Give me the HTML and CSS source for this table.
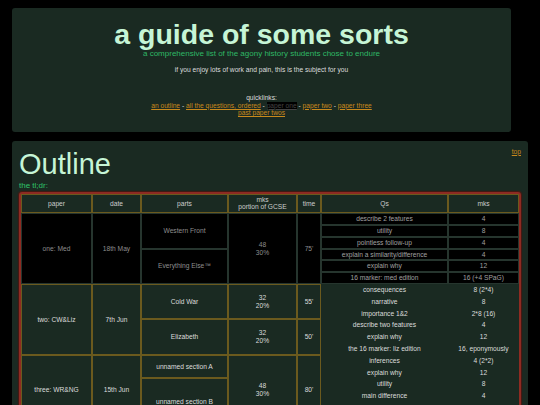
FILE: index.html
```html
<!DOCTYPE html>
<html>
<head>
<meta charset="utf-8">
<title>a guide of some sorts</title>
<link rel="stylesheet" href="styles.css">
</head>
<body>
<div class="page">
  <header class="hero">
    <h1 class="title">a guide of some sorts</h1>
    <p class="subtitle">a comprehensive list of the agony history students chose to endure</p>
    <p class="blurb">if you enjoy lots of work and pain, this is the subject for you</p>
    <p class="quick">quicklinks:<br><a href="#outline">an outline</a> - <a href="#all">all the questions, ordered</a> - <a class="current" href="#one">paper one</a> - <a href="#two">paper two</a> - <a href="#three">paper three</a><br><a href="#past">past paper twos</a></p>
  </header>

  <section class="card" id="outline">
    <a class="top" href="#">top</a>
    <h2 class="heading">Outline</h2>
    <p class="tldr">the tl;dr:</p>
    <table class="grid">
      <colgroup>
        <col class="c-paper"><col class="c-date"><col class="c-parts"><col class="c-mks"><col class="c-time"><col class="c-qs"><col class="c-qm">
      </colgroup>
      <thead>
        <tr><th>paper</th><th>date</th><th>parts</th><th>mks<br>portion of GCSE</th><th>time</th><th>Qs</th><th>mks</th></tr>
      </thead>
      <tbody class="p1">
        <tr><td rowspan="6">one: Med</td><td rowspan="6">18th May</td><td rowspan="3">Western Front</td><td rowspan="6">48<br>30%</td><td rowspan="6">75'</td><td class="q">describe 2 features</td><td class="q">4</td></tr>
        <tr><td class="q">utility</td><td class="q">8</td></tr>
        <tr><td class="q">pointless follow-up</td><td class="q">4</td></tr>
        <tr><td rowspan="3">Everything Else™</td><td class="q">explain a similarity/difference</td><td class="q">4</td></tr>
        <tr><td class="q">explain why</td><td class="q">12</td></tr>
        <tr><td class="q">16 marker: med edition</td><td class="q">16 (+4 SPaG)</td></tr>
      </tbody>
      <tbody class="p2">
        <tr><td rowspan="6">two: CW&amp;Liz</td><td rowspan="6">7th Jun</td><td rowspan="3">Cold War</td><td rowspan="3">32<br>20%</td><td rowspan="3">55'</td><td class="q">consequences</td><td class="q">8 (2*4)</td></tr>
        <tr><td class="q">narrative</td><td class="q">8</td></tr>
        <tr><td class="q">importance 1&amp;2</td><td class="q">2*8 (16)</td></tr>
        <tr><td rowspan="3">Elizabeth</td><td rowspan="3">32<br>20%</td><td rowspan="3">50'</td><td class="q">describe two features</td><td class="q">4</td></tr>
        <tr><td class="q">explain why</td><td class="q">12</td></tr>
        <tr><td class="q">the 16 marker: liz edition</td><td class="q">16, eponymously</td></tr>
      </tbody>
      <tbody class="p3">
        <tr><td rowspan="6">three: WR&amp;NG</td><td rowspan="6">15th Jun</td><td rowspan="2">unnamed section A</td><td rowspan="6">48<br>30%</td><td rowspan="6">80'</td><td class="q">inferences</td><td class="q">4 (2*2)</td></tr>
        <tr><td class="q">explain why</td><td class="q">12</td></tr>
        <tr><td rowspan="4">unnamed section B</td><td class="q">utility</td><td class="q">8</td></tr>
        <tr><td class="q">main difference</td><td class="q">4</td></tr>
        <tr><td class="q">suggest a reason</td><td class="q">4</td></tr>
        <tr><td class="q">how far do you agree</td><td class="q">16 (+4 SPaG)</td></tr>
      </tbody>
    </table>
  </section>
</div>
</body>
</html>
```

FILE: styles.css
```css
html, body {
  margin: 0;
  background: #000;
}

body {
  font-family: "Liberation Sans", Arial, sans-serif;
  color: #ddd;
}

.page {
  padding: 8px 0 0 12px;
}

.hero {
  margin-right: 29px;
  background: #1a2a22;
  border-radius: 3px;
  padding: 11px 0 15px;
  text-align: center;
}

.title {
  margin: 0;
  font-size: 28.5px;
  line-height: 30px;
  font-weight: bold;
  color: #c6f5d6;
}

.subtitle {
  margin: 0;
  font-size: 8px;
  line-height: 9px;
  color: #2fb866;
}

.blurb {
  margin: 7.5px 0 0;
  font-size: 6.67px;
  line-height: 7.67px;
  color: #ddd;
}

.quick {
  margin: 21px 0 0;
  font-size: 6.67px;
  line-height: 7.5px;
  color: #ddd;
}

.quick a, .top {
  color: #c8891c;
}

.quick a.current {
  background: #000;
  color: #444;
}

.card {
  margin: 9px 12px 0 0;
  background: #1a2a22;
  border-radius: 3px;
  padding: 7px 7px 20px;
}

.top {
  float: right;
  font-size: 6.67px;
  line-height: 7.67px;
  margin-top: 0;
}

.heading {
  margin: 0;
  font-size: 29px;
  line-height: 32px;
  font-weight: normal;
  color: #c6f5d6;
}

.tldr {
  margin: 0;
  font-size: 8px;
  line-height: 12px;
  color: #2fc46a;
}

.grid {
  width: 100%;
  table-layout: fixed;
  border-collapse: separate;
  border-spacing: 0;
  border: 2px solid #8e2b22;
  border-radius: 3px;
  box-shadow: 0 0 1px 1px #4a1812;
  font-size: 6.67px;
  line-height: 7.8px;
}

.c-paper { width: 71px; }
.c-date { width: 49px; }
.c-parts { width: 87px; }
.c-mks { width: 69px; }
.c-time { width: 24px; }
.c-qs { width: 127px; }
.c-qm { width: 71px; }

.grid th, .grid td {
  padding: 1px 2px;
  border: 1px solid #6b5a1e;
  text-align: center;
  vertical-align: middle;
  font-weight: normal;
  overflow: hidden;
  white-space: nowrap;
}

.grid th {
  color: #ccc;
}

.p1 td {
  background: #000;
  border-color: #26352e;
  color: #8e8e8e;
}

.p1 td.q {
  color: #a0a0a0;
}

.p2 td, .p3 td {
  color: #dcdcdc;
}

.p2 td.q, .p3 td.q {
  border-color: transparent;
}
```
